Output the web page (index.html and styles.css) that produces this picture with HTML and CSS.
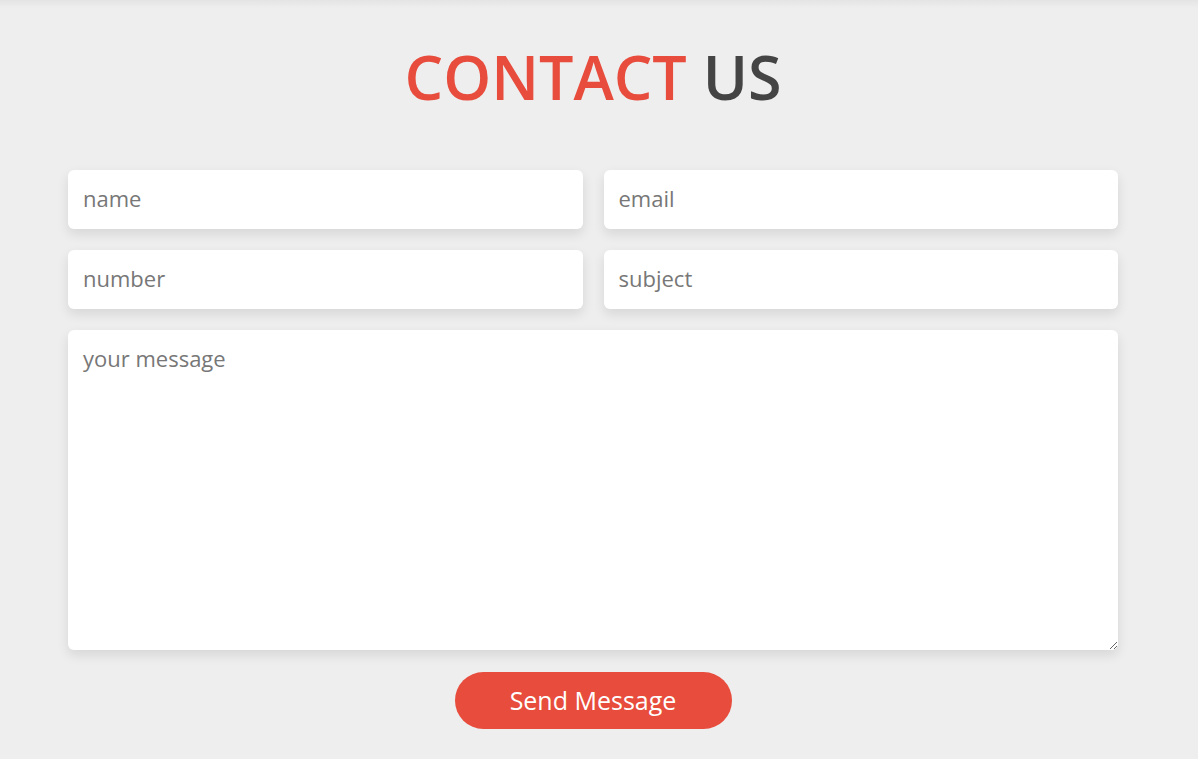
FILE: index.html
```html
<!DOCTYPE html>
<html>
<head>
<meta charset="utf-8">
<link rel="stylesheet" href="styles.css">
</head>
<body>
<section class="contact">
  <h1 class="heading"><span class="accent">CONTACT</span> US</h1>
  <form class="form">
    <div class="row">
      <input class="box" type="text" placeholder="name">
      <input class="box" type="email" placeholder="email">
    </div>
    <div class="row">
      <input class="box" type="text" placeholder="number">
      <input class="box" type="text" placeholder="subject">
    </div>
    <textarea class="box message" placeholder="your message"></textarea>
    <div class="actions">
      <button class="btn" type="button">Send Message</button>
    </div>
  </form>
</section>
</body>
</html>
```
FILE: styles.css
```css
html, body {
  margin: 0;
  padding: 0;
  background: #eeeeee;
  height: 100%;
}
body {
  font-family: "Open Sans", "DejaVu Sans", sans-serif;
  overflow: hidden;
}
.contact {
  min-height: 759px;
  box-sizing: border-box;
  padding: 35px 80px 0 68px;
  background: linear-gradient(to bottom, #e4e4e4 0, #eeeeee 8px, #eeeeee 100%);
}
.heading {
  margin: 0 0 51px;
  text-align: center;
  font-size: 61px;
  line-height: 84px;
  font-weight: 600;
  color: #444444;
  width: 1050px;
}
.accent {
  color: #e74c3c;
}
.form {
  width: 1050px;
  display: flex;
  flex-direction: column;
  gap: 21px;
}
.row {
  display: flex;
  gap: 21px;
}
.box {
  flex: 1;
  min-width: 0;
  height: 59px;
  box-sizing: border-box;
  border: none;
  border-radius: 6px;
  background: #ffffff;
  padding: 0 15px 3px;
  font-family: inherit;
  font-size: 22px;
  color: #333;
  box-shadow: 0 5px 12px rgba(0, 0, 0, 0.1);
  outline: none;
}
.box::placeholder {
  color: #777777;
}
.message {
  flex: none;
  height: 320px;
  padding: 13px 15px;
  resize: vertical;
  display: block;
}
.actions {
  display: flex;
  justify-content: center;
  margin-top: 1px;
}
.btn {
  width: 277px;
  height: 57px;
  border: none;
  border-radius: 29px;
  background: #e74c3c;
  color: #ffffff;
  font-family: inherit;
  font-size: 25px;
  padding-bottom: 3px;
  cursor: pointer;
}
```
